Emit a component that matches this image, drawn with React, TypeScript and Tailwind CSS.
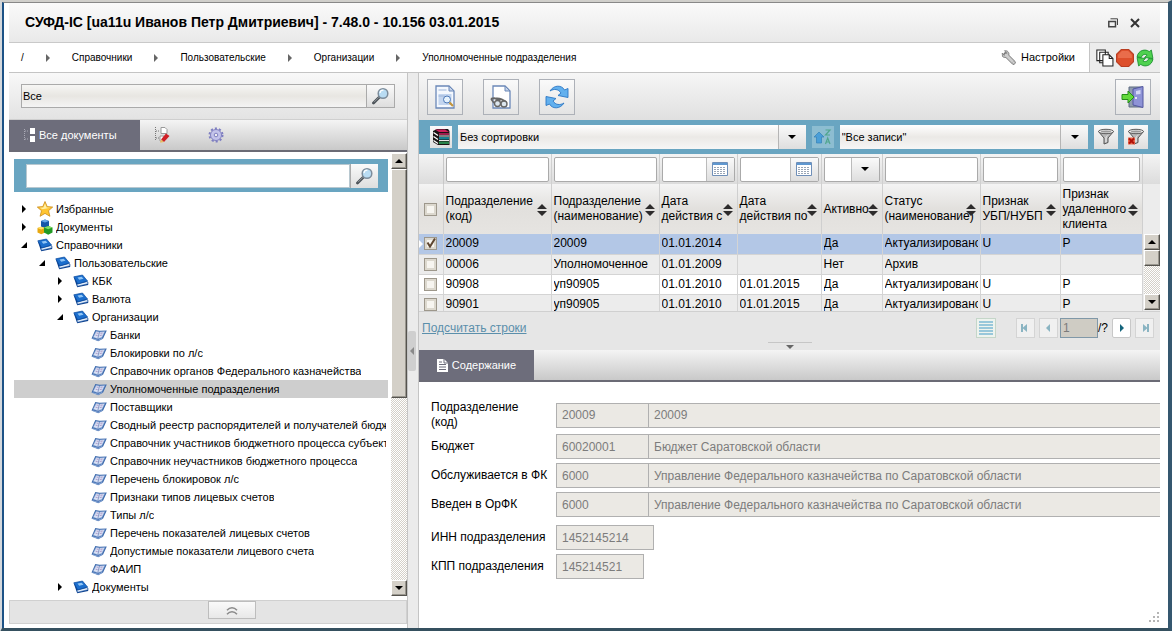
import React from 'react';
import clsx from 'clsx';

interface TreeItem {
  label: string;
  level: number;
  icon: 'star' | 'cubes' | 'book' | 'page';
  open?: boolean;
  selected?: boolean;
}

const treeItems: TreeItem[] = [
  { label: 'Избранные', level: 0, icon: 'star', open: false },
  { label: 'Документы', level: 0, icon: 'cubes', open: false },
  { label: 'Справочники', level: 0, icon: 'book', open: true },
  { label: 'Пользовательские', level: 1, icon: 'book', open: true },
  { label: 'КБК', level: 2, icon: 'book', open: false },
  { label: 'Валюта', level: 2, icon: 'book', open: false },
  { label: 'Организации', level: 2, icon: 'book', open: true },
  { label: 'Банки', level: 3, icon: 'page' },
  { label: 'Блокировки по л/с', level: 3, icon: 'page' },
  { label: 'Справочник органов Федерального казначейства', level: 3, icon: 'page' },
  { label: 'Уполномоченные подразделения', level: 3, icon: 'page', selected: true },
  { label: 'Поставщики', level: 3, icon: 'page' },
  { label: 'Сводный реестр распорядителей и получателей бюджетных средств', level: 3, icon: 'page' },
  { label: 'Справочник участников бюджетного процесса субъекта', level: 3, icon: 'page' },
  { label: 'Справочник неучастников бюджетного процесса', level: 3, icon: 'page' },
  { label: 'Перечень блокировок л/с', level: 3, icon: 'page' },
  { label: 'Признаки типов лицевых счетов', level: 3, icon: 'page' },
  { label: 'Типы л/с', level: 3, icon: 'page' },
  { label: 'Перечень показателей лицевых счетов', level: 3, icon: 'page' },
  { label: 'Допустимые показатели лицевого счета', level: 3, icon: 'page' },
  { label: 'ФАИП', level: 3, icon: 'page' },
  { label: 'Документы', level: 2, icon: 'book', open: false },
];

const columns = [
  { title: 'Подразделение\n(код)', filter: 'text' },
  { title: 'Подразделение\n(наименование)', filter: 'text' },
  { title: 'Дата\nдействия с', filter: 'date' },
  { title: 'Дата\nдействия по', filter: 'date' },
  { title: 'Активно', filter: 'select' },
  { title: 'Статус\n(наименование)', filter: 'text' },
  { title: 'Признак\nУБП/НУБП', filter: 'text' },
  { title: 'Признак\nудаленного\nклиента', filter: 'text' },
];

const rows = [
  ['20009', '20009', '01.01.2014', '', 'Да', 'Актуализировано', 'U', 'P'],
  ['00006', 'Уполномоченное', '01.01.2009', '', 'Нет', 'Архив', '', ''],
  ['90908', 'уп90905', '01.01.2010', '01.01.2015', 'Да', 'Актуализировано', 'U', 'P'],
  ['90901', 'уп90905', '01.01.2010', '01.01.2015', 'Да', 'Актуализировано', 'U', 'P'],
];

const details = [
  { id: 'dept', label: 'Подразделение\n(код)', code: '20009', name: '20009' },
  { id: 'budget', label: 'Бюджет', code: '60020001', name: 'Бюджет Саратовской области' },
  { id: 'fk', label: 'Обслуживается в ФК', code: '6000', name: 'Управление Федерального казначейства по Саратовской области' },
  { id: 'orfk', label: 'Введен в ОрФК', code: '6000', name: 'Управление Федерального казначейства по Саратовской области' },
];

const TreeIcon = ({ type }: { type: TreeItem['icon'] }) => {
  if (type === 'star') {
    return (
      <svg viewBox="0 0 16 16" className="h-4 w-4">
        <path d="M8 .5l2.2 5.100 5.500.5-4.200 3.600 1.400 5.600L8 12.400l-4.900 2.900 1.400-5.600L.3 6.100l5.500-.5z" fill="#ffc531" stroke="#c98a1c" strokeWidth=".8" />
        <path d="M8 2.400l1.600 4 3.700.3-7.600 1.500-3-1.500 3.700-.3z" fill="#fff0a6" />
      </svg>
    );
  }
  if (type === 'cubes') {
    return (
      <svg viewBox="0 0 16 16" className="h-4 w-4">
        <path d="M4 2l4-1.500L12 2v5.500L8 9.500l-4-2z" fill="#1556a8" />
        <path d="M4 2l4-1.500L12 2 8 3.600z" fill="#69a8ea" />
        <path d="M.5 9l3.500-1.300L8 9v4.500l-3.700 1.800L.5 13.500z" fill="#e8a80f" />
        <path d="M.5 9l3.500-1.300L8 9l-3.700 1.500z" fill="#ffe16b" />
        <path d="M7 8.500L11.300 7l4.200 1.500v5l-4.300 2.200L7 13.500z" fill="#219a24" />
        <path d="M7 8.500L11.300 7l4.200 1.500-4.300 1.700z" fill="#83dc67" />
      </svg>
    );
  }
  if (type === 'book') {
    return (
      <svg viewBox="0 0 16 16" className="h-4 w-4">
        <path d="M.8 4.500L4.200 14.300l11-2.300V9z" fill="#0b3f8c" />
        <path d="M4.500 13.200L4 11.200l10.500-2.700.4 2.200z" fill="#e8f1fb" stroke="#1553a4" strokeWidth=".5" />
        <path d="M.8 3.800L9.500 2l5 6-9.800 2.900z" fill="#1b6ecd" stroke="#0c4a9e" strokeWidth=".7" />
        <path d="M4.500 4.500l4.200-.8 1.800 2-4.300 1z" fill="#8fc4f5" />
      </svg>
    );
  }
  return (
    <svg viewBox="0 0 16 16" className="h-4 w-4">
      <path d="M.5 11.500L4.300 3l4.200.8L15.800 3.500 12 11.800l-4.800 2.500z" fill="#3f6cae" />
      <path d="M2.200 10.200l3-6 3.300.8 5.300-.6-2.900 6-4 1.400z" fill="#d9e2f5" stroke="#7f9dcf" strokeWidth=".5" />
      <path d="M8.500 5L6.800 11.500" stroke="#6f85bb" strokeWidth=".8" />
      <path d="M5.500 6l2 .4M4.600 8.200l2 .4M9.500 6.400l2.200-.4M8.700 8.600l2.200-.5" stroke="#b09ac9" />
      <path d="M1.500 11.700l5.700 1.600 4.300-2" fill="none" stroke="#a8c2e8" strokeWidth=".7" />
    </svg>
  );
};

const Magnifier = () => (
  <svg viewBox="0 0 18 18" className="h-4.5 w-4.5">
    <path d="M1.500 16l6-6" stroke="#4b5157" strokeWidth="2.8" strokeLinecap="round" />
    <path d="M2 15.200l5-5" stroke="#a2a9b0" strokeWidth=".8" />
    <circle cx="11" cy="6.5" r="4.8" fill="#b9dcf3" stroke="#7c8c9b" strokeWidth="1.5" />
    <path d="M8 6a3.200 3.200 0 013.500-2.800" stroke="#fff" strokeWidth="1.2" fill="none" />
  </svg>
);

const Triangle = ({ className, dir }: { className?: string; dir: 'up' | 'down' | 'left' | 'right' }) => (
  <svg viewBox="0 0 8 8" className={clsx('h-2 w-2 shrink-0', className)} fill="currentColor">
    {dir === 'up' && <path d="M0 6l4-4 4 4z" />}
    {dir === 'down' && <path d="M0 2h8L4 6z" />}
    {dir === 'left' && <path d="M6 0v8L2 4z" />}
    {dir === 'right' && <path d="M2 0v8l4-4z" />}
  </svg>
);

const SortIcon = () => (
  <svg viewBox="0 0 10 12" className="h-3 w-2.5" fill="#2d2b2b">
    <path d="M0 5l5-5 5 5zM0 7h10l-5 5z" />
  </svg>
);

const CalendarIcon = () => (
  <svg viewBox="0 0 16 14" className="h-3.5 w-4">
    <path d="M.5.5h15v13H.5z" fill="#fff" stroke="#6f8fb8" />
    <path d="M1 1h14v2H1z" fill="#5f97cf" />
    <path d="M2 5.500h12M2 7.500h12M2 9.500h12M2 11.500h12" stroke="#9aa6b6" strokeDasharray="2 1" />
  </svg>
);

const Funnel = ({ off }: { off?: boolean }) => (
  <svg viewBox="0 0 18 18" className="h-4.5 w-4.5">
    <path d="M1.500 3.500L7 10v6l4-1.500V10l5.500-6.500z" fill="#b9b9b9" stroke="#555" />
    <path d="M8.500 9.500v5l1-.5v-5l3-4.500z" fill="#f4f4f4" />
    <ellipse cx="9" cy="3.5" rx="7.5" ry="2.2" fill="#e9e9e9" stroke="#5a5a5a" />
    <ellipse cx="9" cy="3.6" rx="5" ry="1" fill="#999" />
    {off && <path d="M1 9.500h7v7H1z" fill="#e86a4e" />}
    {off && <path d="M2 10.500l5 5M7 10.500l-5 5" stroke="#b11208" strokeWidth="2" />}
  </svg>
);

const bevel = 'border border-t-white border-l-white border-r-[#55534e] border-b-[#55534e] bg-[#d4d0c8] shadow-[inset_-1px_-1px_0_#9a978f]';
const track = 'bg-[repeating-conic-gradient(#d4d0c8_0_25%,#ffffff_0_50%)] bg-[size:2px_2px]';
const softButton = 'flex items-center justify-center bg-linear-to-b from-[#fafafa] to-[#dedede]';

const ScrollBar = ({ className, thumb }: { className: string; thumb: string }) => (
  <div className={clsx('flex w-4 shrink-0 flex-col', track, className)}>
    <button aria-label="Вверх" className={clsx('flex h-4 items-center justify-center', bevel)}>
      <Triangle dir="up" />
    </button>
    <div className={clsx(thumb, bevel)} />
    <button aria-label="Вниз" className={clsx('mt-auto flex h-4 items-center justify-center', bevel)}>
      <Triangle dir="down" />
    </button>
  </div>
);

const ToolButton = ({ label, children }: { label: string; children: React.ReactNode }) => (
  <button aria-label={label} className="flex h-9 w-9 items-center justify-center border border-[#adb1b8] bg-linear-to-b from-[#fafafa] to-[#e4e4e4]">
    {children}
  </button>
);

const Combo = ({ label, value, className }: { label: string; value: string; className: string }) => (
  <div className={clsx('relative h-6 min-w-0', className)}>
    <select aria-label={label} className="h-full w-full appearance-none bg-linear-to-b from-white via-[#ebe9e6] to-[#f6f6f6] px-0.5">
      <option>{value}</option>
    </select>
    <span className={clsx('pointer-events-none absolute inset-y-0 right-0 w-7 border-l border-[#b5b5b5]', softButton)}>
      <Triangle dir="down" />
    </span>
  </div>
);

const Header = () => (
  <header className="flex h-10 items-center justify-between border-b border-[#c9c9c9] bg-linear-to-b from-[#fafafa] to-[#e9e9e9] pr-5 pl-4">
    <h1 className="text-[14px] font-bold">СУФД-IC [ua11u Иванов Петр Дмитриевич] - 7.48.0 - 10.156 03.01.2015</h1>
    <div className="flex items-center gap-3">
      <button aria-label="Восстановить">
        <svg viewBox="0 0 10 10" className="h-2.5 w-2.5" fill="none" stroke="#444">
          <path d="M.8 3.500h6.700v5.200H.8z" strokeWidth="1.5" />
          <path d="M2.500.8H9.500V7" strokeWidth="1" />
        </svg>
      </button>
      <button aria-label="Закрыть">
        <svg viewBox="0 0 10 10" className="h-2.5 w-2.5" stroke="#333" strokeWidth="2">
          <path d="M1 1l8 8M9 1L1 9" />
        </svg>
      </button>
    </div>
  </header>
);

const Breadcrumbs = () => (
  <div className="flex h-[30px] border-b border-[#c4c4c4] bg-white text-[10px]">
    <nav className="flex flex-1 items-center gap-5 pl-3 whitespace-nowrap">
      <a href="#root">/</a>
      {['Справочники', 'Пользовательские', 'Организации', 'Уполномоченные подразделения'].map(c => (
        <React.Fragment key={c}>
          <Triangle dir="right" className="text-[#666]" />
          <a href="#crumb">{c}</a>
        </React.Fragment>
      ))}
    </nav>
    <button className="flex items-center gap-1 pr-3.5 text-[11px]">
      <svg viewBox="0 0 16 16" className="h-4 w-4">
        <path d="M4.500 4.500l8 8" stroke="#777" strokeWidth="4.5" strokeLinecap="round" />
        <path d="M1.200 3l2 2.200 2-.5.300-2-2-2C6.500.2 8.500 2.500 7.800 5S3.500 8.500 1.500 6.500z" fill="#bcbcbc" stroke="#777" strokeWidth=".8" />
        <path d="M5 5l7.500 7.500" stroke="#cdcdcd" strokeWidth="3" strokeLinecap="round" />
        <circle cx="12.800" cy="12.800" r="1" fill="#fff" stroke="#777" strokeWidth=".5" />
      </svg>
      Настройки
    </button>
    <div className="flex items-center gap-0.5 border-l border-[#c4c4c4] bg-[#ececec] px-1.5">
      <button aria-label="Копировать">
        <svg viewBox="0 0 17 17" className="h-4.5 w-4.5" fill="#fff" stroke="#222">
          <path d="M.8 1h8v10h-8zM3.500 3h8v10h-8z" />
          <path d="M6.500 5.500h6l3.500 3.500v7h-9.500z" />
          <path d="M12.500 5.500V9H16" fill="none" />
        </svg>
      </button>
      <button aria-label="Остановить">
        <svg viewBox="0 0 17 17" className="h-4.5 w-4.5">
          <path d="M5 .5h7L16.500 5v7L12 16.500H5L.5 12V5z" fill="#dd4f2b" stroke="#b93e22" />
          <path d="M5.500 2h6L15 5.500v3H2v-3z" fill="#e96d4b" />
        </svg>
      </button>
      <button aria-label="Обновить">
        <svg viewBox="0 0 17 17" className="h-4.5 w-4.5" fill="#4fd14f" stroke="#168d2b" strokeWidth=".8">
          <path d="M1 7.500C2 1 9-.5 12.500 2.500L14.500 1l1.500 8-8-1 2.500-2.200C8.500 4.500 6 5 5 8z" />
          <path d="M16 9.500C15 16 8 17.500 4.500 14.500L2.500 16 1 8l8 1-2.500 2.200C8.500 12.500 11 12 12 9z" />
        </svg>
      </button>
    </div>
  </div>
);

const Sidebar = () => (
  <aside className="flex w-[398px] shrink-0 flex-col">
    <div className="flex h-[47px] items-center border-b border-[#cfcfcf] bg-linear-to-b from-[#f8f8f8] to-[#e3e3e3] px-3">
      <input aria-label="Раздел" defaultValue="Все" className="h-6 min-w-0 flex-1 border border-[#aaa] bg-linear-to-b from-[#f6f6f4] via-[#e8e6e2] to-[#f4f4f4] px-px text-[11px]" />
      <button aria-label="Искать раздел" className={clsx('h-6 w-7 border border-l-0 border-[#aaa]', softButton)}>
        <Magnifier />
      </button>
    </div>
    <div className="flex h-8 border-b-2 border-[#6b6b75] bg-linear-to-b from-[#f4f4f4] to-[#c9c9c9]">
      <button className="flex w-[131px] items-center gap-0.5 bg-[#6d6d7b] pl-3.5 text-[11px] text-white">
        <svg viewBox="0 0 14 16" className="h-4 w-3.5" fill="#fff">
          <path d="M7 1h5v6H7zM7 9h5v6H7z" />
          <path d="M1.500 2v12M2 4h4M2 12h4" stroke="#a9a9b5" strokeDasharray="1 1" />
        </svg>
        Все документы
      </button>
      <button aria-label="Правка" className="ml-3.5">
        <svg viewBox="0 0 16 16" className="h-4 w-4">
          <path d="M1.500 0v14M2 4h4M2 11h3" stroke="#777" strokeDasharray="1 1" />
          <path d="M7 .5h4l2 2v4H7zM6 9h4v5H6z" fill="#fff" stroke="#999" />
          <path d="M7 12.500l5-6 3.500 2.500-5.500 6z" fill="#cf1f26" />
          <path d="M7 12.500l3 2.500-4 .8z" fill="#e9bd62" />
        </svg>
      </button>
      <button aria-label="Параметры" className="ml-9.5">
        <svg viewBox="0 0 16 16" className="h-4 w-4">
          <circle cx="8" cy="8" r="6.500" fill="none" stroke="#7e7ec2" strokeWidth="2" strokeDasharray="2.100 2" />
          <circle cx="8" cy="8" r="5.500" fill="#c3c3ea" stroke="#8080c0" />
          <circle cx="8" cy="8" r="1.800" fill="#eee" stroke="#8080c0" />
        </svg>
      </button>
    </div>
    <div className="flex flex-1 bg-white pt-px pl-[5px]">
      <div className="min-w-0 flex-1 pt-1.5">
        <div className="flex h-[33px] items-center bg-[#69a5c1] pr-2.5 pl-3">
          <input aria-label="Поиск" className="h-6 min-w-0 flex-1 border border-[#b8c8d0] bg-white px-1 text-[11px]" />
          <button aria-label="Найти" className={clsx('h-6 w-7 border-l border-[#aaa]', softButton)}>
            <Magnifier />
          </button>
        </div>
        <ul className="pt-2 pb-1 text-[11px] leading-[18px]">
          {treeItems.map((item, i) => (
            <li
              key={i}
              className={clsx('flex items-center gap-[3px] overflow-hidden pr-0.5 whitespace-nowrap', item.selected && 'bg-[#cecece]')}
              style={{ paddingLeft: item.level * 18 }}
            >
              <span className="flex w-5 shrink-0 justify-center">
                {item.open === false && <Triangle dir="right" />}
                {item.open && (
                  <svg viewBox="0 0 6 6" className="h-1.5 w-1.5">
                    <path d="M6 0v6H0z" />
                  </svg>
                )}
              </span>
              <span className="shrink-0"><TreeIcon type={item.icon} /></span>
              <span className="overflow-hidden">{item.label}</span>
            </li>
          ))}
        </ul>
      </div>
      <ScrollBar className="mb-1 ml-[3px]" thumb="h-[229px]" />
    </div>
    <div className="mb-1 flex h-6 justify-center border border-[#d0d0d0] bg-[#e4e4e4] pr-px pb-1 pl-12">
      <button aria-label="Свернуть" className="flex w-12 items-center justify-center border border-[#bdbdbd] bg-linear-to-b from-[#fafafa] to-[#e8e8e8]">
        <svg viewBox="0 0 12 9" className="h-[9px] w-3" fill="none" stroke="#8a8a8a" strokeWidth="1.5">
          <path d="M1 4.300C4 1 8 1 11 4.300M1 8.300C4 5 8 5 11 8.300" />
        </svg>
      </button>
    </div>
  </aside>
);

const Toolbar = () => (
  <div className="flex h-[47px] items-center bg-linear-to-b from-[#f6f6f6] to-[#e0e0e0] pr-[9px] pl-2">
    <div className="flex flex-1 gap-5">
      <ToolButton label="Просмотр">
        <svg viewBox="0 0 22 24" className="h-6 w-[22px]">
          <path d="M2 1h13l5 5v17H2z" fill="#f4f8fe" stroke="#6b88b8" strokeWidth="1.3" />
          <path d="M15 1v5h5z" fill="#c6d4ea" stroke="#6b88b8" />
          <path d="M4.500 9h13v11h-13z" fill="#c3d5ef" />
          <path d="M4.500 5h8M4.500 11h6" stroke="#9db4d8" />
          <circle cx="13" cy="14.500" r="3.500" fill="#e6f2fc" stroke="#4b78b8" />
          <path d="M15.500 17.500l3.500 3.500" stroke="#c3953c" strokeWidth="2.2" />
        </svg>
      </ToolButton>
      <ToolButton label="Найти документ">
        <svg viewBox="0 0 22 24" className="h-6 w-[22px]">
          <path d="M3 1h12l5 5v17H3z" fill="#fff" stroke="#6b88b8" strokeWidth="1.3" />
          <path d="M15 1v5h5z" fill="#c6d4ea" stroke="#6b88b8" />
          <path d="M1 14c4-2 7 0 9 2M6 13.500c4-.5 7 1 10 3.500" stroke="#666" strokeWidth="2" fill="none" />
          <path d="M1 14l3 4" stroke="#666" strokeWidth="1.5" />
          <circle cx="7.500" cy="18.500" r="3" fill="#dce6ee" stroke="#666" strokeWidth="1.4" />
          <circle cx="14" cy="19" r="3" fill="#dce6ee" stroke="#666" strokeWidth="1.4" />
        </svg>
      </ToolButton>
      <ToolButton label="Обновить список">
        <svg viewBox="0 0 24 24" className="h-6 w-6" fill="#62b0ee" stroke="#2a76c4" strokeWidth=".9">
          <path d="M5 6C9-.5 17 0 19.500 5L23 3.500V12.500L13 10.500 16 8C13.500 4 9 3.500 5 6z" />
          <path d="M19 18c-4 6.500-12 6-14.500 1L1 20.500V11.500L11 13.500 8 16c2.500 4 7 4.500 11 2z" />
        </svg>
      </ToolButton>
    </div>
    <ToolButton label="Выход">
      <svg viewBox="0 0 24 24" className="h-6 w-6">
        <path d="M8 2h13v20H8z" fill="#8f9cae" stroke="#5c6a80" />
        <path d="M12 4l10-2.500v21L12 20z" fill="#8e93d6" stroke="#5357a0" />
        <path d="M15 6l4.500-1v4l-4.500.5z" fill="#d4d7f5" />
        <circle cx="15" cy="13" r="1" fill="#fff" />
        <path d="M1 9.500h6V6l6 6-6 6v-3.500H1z" fill="#62d93b" stroke="#258d19" />
      </svg>
    </ToolButton>
  </div>
);

const FilterBar = () => (
  <div className="flex h-[34px] items-center gap-1.5 bg-[#69a5c1] pr-3 pl-[11px] text-[11px]">
    <button aria-label="Сортировки" className={clsx('h-[22px] w-[22px]', softButton)}>
      <svg viewBox="0 0 18 18" className="h-4.5 w-4.5">
        <path d="M1 3l4-2h11l1.500 2v14H6l-5-3z" fill="#1a1414" />
        <path d="M3 1.500h10l4 2.500H7z" fill="#cc1f5c" />
        <path d="M7 5h10v2H7z" fill="#9c1c4c" />
        <path d="M7 9h10v2.500H7z" fill="#167f92" />
        <path d="M7 13.500h10V16H7z" fill="#28834a" />
        <path d="M1.500 4.500L6 7.500M1.500 8.500L6 11.500M1.500 12.500L6 15.500" stroke="#fff" strokeWidth="1.3" />
        <path d="M7 8h10M7 12.500h10" stroke="#e8e8e8" />
      </svg>
    </button>
    <Combo label="Сортировка" value="Без сортировки" className="flex-[7]" />
    <button aria-label="Порядок сортировки" className="flex h-[22px] w-[22px] items-center justify-center bg-[#8dbdd1]">
      <svg viewBox="0 0 18 18" className="h-4.5 w-4.5">
        <path d="M5 4l5 5H7.500v6h-5V9H0z" fill="#4a9fd8" stroke="#3381b8" strokeWidth=".7" />
        <path d="M11.500 2h4.500l-4.500 5H16M11.500 16l2.200-6 2.300 6M12.200 14h3" fill="none" stroke="#51a68e" strokeWidth="1.2" />
      </svg>
    </button>
    <Combo label="Фильтр" value={'"Все записи"'} className="flex-[5]" />
    <button aria-label="Фильтровать" className={clsx('h-6 w-6', softButton)}><Funnel /></button>
    <button aria-label="Сбросить фильтр" className={clsx('h-6 w-6', softButton)}><Funnel off /></button>
  </div>
);

const FilterCell = ({ title, filter }: { title: string; filter: string }) => (
  <div className="flex h-[25px] rounded-xs border border-[#aaa] bg-white">
    <input aria-label={`Фильтр: ${title}`} className="min-w-0 flex-1 px-1 text-[12px]" />
    {filter !== 'text' && (
      <button aria-label={`Выбрать: ${title}`} className={clsx('w-7 border-l border-[#bbb]', softButton)}>
        {filter === 'date' ? <CalendarIcon /> : <Triangle dir="down" />}
      </button>
    )}
  </div>
);

const box = 'block h-[13px] w-[13px] appearance-none border border-[#9d978b] bg-[#f7f5f0] shadow-[inset_0_0_0_2px_#dcd8ce]';

const Grid = () => (
  <div className="h-[157px] overflow-hidden bg-[#e6e6e6]">
    <table className="w-full table-fixed border-collapse text-[12px]">
      <colgroup>
        <col className="w-6" />
        <col className="w-[108px]" />
        <col className="w-[108px]" />
        <col className="w-[78px]" />
        <col className="w-[84px]" />
        <col className="w-[61px]" />
        <col className="w-[98px]" />
        <col className="w-[80px]" />
        <col className="w-[82px]" />
        <col />
      </colgroup>
      <thead>
        <tr className="h-[30px] bg-linear-to-b from-[#f4f4f4] to-[#dcdcdc]">
          <td className="border-r border-[#c8c8c8]" />
          {columns.map(c => (
            <td key={c.title} className="border-r border-[#d0d0d0] px-0.5 py-0">
              <FilterCell title={c.title} filter={c.filter} />
            </td>
          ))}
          <td />
        </tr>
        <tr className="h-[50px] bg-linear-to-b from-[#f4f4f4] via-[#e2e0dd] to-[#e6e4e1]">
          <th className="border-r border-[#cfcfcf] p-0">
            <label className="flex justify-center">
              <input type="checkbox" aria-label="Выбрать все" className={box} />
            </label>
          </th>
          {columns.map(c => (
            <th key={c.title} className="relative border-r border-[#cfcfcf] py-0 pr-0 pl-0.5 text-left leading-[15px] font-normal whitespace-pre">
              {c.title}
              <button aria-label={`Сортировать: ${c.title}`} className="absolute top-5 right-1">
                <SortIcon />
              </button>
            </th>
          ))}
          <th className="bg-[#ececec]" />
        </tr>
      </thead>
      <tbody>
        {rows.map((row, i) => (
          <tr key={row[0]} className={clsx('h-5', i === 0 ? 'bg-[#b3c7e6]' : i === 2 ? 'bg-white' : 'bg-[#ececec]')}>
            <td className="relative border-r border-b border-[#d4d4d4] p-0">
              {i === 0 && <Triangle dir="right" className="absolute top-1.5 left-[-2px] text-white" />}
              <label className="relative flex justify-center">
                <input type="checkbox" aria-label={`Выбрать ${row[0]}`} defaultChecked={i === 0} className={box} />
                {i === 0 && (
                  <svg viewBox="0 0 12 12" className="pointer-events-none absolute top-0 h-3 w-3" fill="none" stroke="#5e4630" strokeWidth="2">
                    <path d="M2.500 5.500l2.500 4L10 1.500" />
                  </svg>
                )}
              </label>
            </td>
            {row.map((cell, j) => (
              <td key={j} className="border-r border-b border-[#d4d4d4] px-0.5 py-0 leading-[19px] whitespace-nowrap">
                <div className="overflow-hidden">{cell}</div>
              </td>
            ))}
            {i === 0 && (
              <td rowSpan={rows.length} className="bg-[#ececec] p-0 pl-px align-top">
                <ScrollBar className="h-[76px]" thumb="h-4" />
              </td>
            )}
          </tr>
        ))}
      </tbody>
    </table>
  </div>
);

const pageButton = 'flex h-5 w-[19px] items-center justify-center border border-[#d4d4d4] bg-[#f0f0f0] text-[#8ab4c2]';

const Pager = () => (
  <div className="relative flex h-[39px] items-start border-t border-[#d0d0d0] bg-[#e6e6e6] pt-1.5 pr-1.5 pl-[3px] text-[12px] leading-5">
    <a href="#count" className="text-[#5b8fab] underline">Подсчитать строки</a>
    <span className="absolute bottom-0 left-1/2 flex h-2 w-11 -translate-x-1/2 items-start justify-center border-t border-[#c6c6c6]">
      <Triangle dir="down" className="text-[#666]" />
    </span>
    <button aria-label="Показать список" className="mr-5 ml-auto flex h-5 w-5 items-center justify-center border border-[#c5d6c9] bg-[#eef3ee]">
      <svg viewBox="0 0 14 14" className="h-3.5 w-3.5">
        <path d="M0 1h14M0 4h14M0 7h14M0 10h14M0 13h14" stroke="#7cb9d4" strokeWidth="1.6" />
      </svg>
    </button>
    <button aria-label="Первая" className={pageButton}>
      <svg viewBox="0 0 8 8" className="h-2 w-2" fill="currentColor"><path d="M0 0h2v3.500L6 0v8L2 4.500V8H0z" /></svg>
    </button>
    <button aria-label="Предыдущая" className={clsx('mr-0.5 ml-1', pageButton)}><Triangle dir="left" /></button>
    <input aria-label="Страница" defaultValue="1" className="h-5 w-[38px] border border-[#8098a8] bg-[#cfccc4] px-0.5 text-[#7b7b7b]" />
    <span>/?</span>
    <button aria-label="Следующая" className="ml-1 flex h-5 w-[19px] items-center justify-center rounded-xs border border-[#c8c8c8] bg-white text-[#14657c]">
      <Triangle dir="right" />
    </button>
    <button aria-label="Последняя" className={clsx('ml-1', pageButton)}>
      <svg viewBox="0 0 8 8" className="h-2 w-2" fill="currentColor"><path d="M8 0H6v3.500L2 0v8l4-3.500V8h2z" /></svg>
    </button>
  </div>
);

const field = 'h-[25px] border border-[#b0b0b0] bg-[#ebe9e4] px-[5px] text-[#7c7c7c]';
const fieldLabel = 'w-[125px] shrink-0 leading-[15px] whitespace-pre-line';

const Details = () => (
  <form className="flex flex-1 flex-col gap-1 bg-white pt-[18px] pb-3 pl-3 text-[12px]">
    {details.map(d => (
      <div key={d.id} className="flex items-center">
        <label htmlFor={d.id} className={fieldLabel}>{d.label}</label>
        <input id={d.id} readOnly defaultValue={d.code} className={clsx('w-[93px]', field)} />
        <input aria-label={`${d.label}, наименование`} readOnly defaultValue={d.name} className={clsx('min-w-0 flex-1 border-r-0 border-l-0', field)} />
      </div>
    ))}
    <div className="mt-1 flex items-center">
      <label htmlFor="inn" className={fieldLabel}>ИНН подразделения</label>
      <input id="inn" readOnly defaultValue="1452145214" className={clsx('w-[98px]', field)} />
    </div>
    <div className="flex items-center">
      <label htmlFor="kpp" className={fieldLabel}>КПП подразделения</label>
      <input id="kpp" readOnly defaultValue="145214521" className={clsx('w-[88px]', field)} />
    </div>
  </form>
);

export default function App() {
  return (
    <div className="flex min-h-screen flex-col border-t-2 border-r-4 border-b-4 border-l-2 border-t-[#d0cfcb] border-r-[#35576f] border-b-[#35505f] border-l-[#d4d8dc] bg-white font-['Liberation_Sans',Arial,sans-serif] text-black">
      <div className="flex flex-1 flex-col border-t border-l-2 border-t-[#888] border-l-[#1c5286] pr-2 pl-[5px]">
        <Header />
        <Breadcrumbs />
        <div className="flex flex-1">
          <Sidebar />
          <div className="flex w-3 shrink-0 items-center border-x border-[#c4c4c4] bg-[#ebebeb]">
            <button aria-label="Скрыть панель" className="flex h-10 w-2 items-center rounded-xs bg-[#cfcfcf]">
              <Triangle dir="left" className="text-[#8a8a8a]" />
            </button>
          </div>
          <main className="relative flex min-w-0 flex-1 flex-col">
            <Toolbar />
            <FilterBar />
            <Grid />
            <Pager />
            <div className="flex h-8 border-b-2 border-[#6b6b75] bg-linear-to-b from-[#f4f4f4] to-[#c9c9c9]">
              <button className="flex w-[115px] items-center justify-center gap-1 bg-[#6d6d7b] text-[11px] text-white">
                <svg viewBox="0 0 11 13" className="h-[13px] w-[11px]">
                  <path d="M0 0h7l4 4v9H0z" fill="#fff" />
                  <path d="M2 5.500h7M2 8h7M2 10.500h7M2 3h3M7 0v4h4" stroke="#6d6d7b" fill="none" />
                </svg>
                Содержание
              </button>
            </div>
            <Details />
            <svg viewBox="0 0 12 12" className="absolute right-0 bottom-1 h-3 w-3" fill="#b5b5b5">
              <path d="M9 0h2v2H9zM9 4h2v2H9zM5 4h2v2H5zM9 8h2v2H9zM5 8h2v2H5zM1 8h2v2H1z" />
            </svg>
          </main>
        </div>
      </div>
    </div>
  );
}
